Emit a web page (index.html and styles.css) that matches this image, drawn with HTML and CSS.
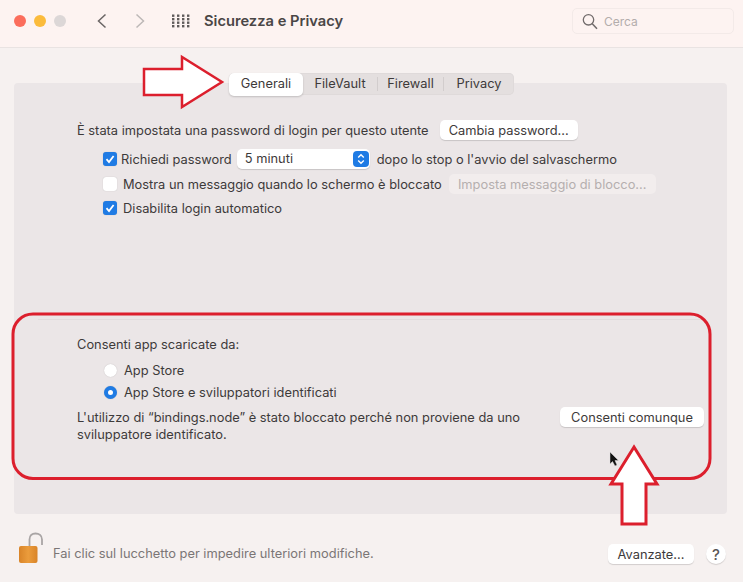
FILE: index.html
```html
<!DOCTYPE html>
<html lang="it">
<head>
    <meta charset="UTF-8">
    <meta name="viewport" content="width=device-width, initial-scale=1.0">
    <title>Sicurezza e Privacy</title>
    <link rel="stylesheet" href="styles.css">
</head>
<body>
    <header class="toolbar">
        <div class="lights">
            <span class="light light-red"></span>
            <span class="light light-yellow"></span>
            <span class="light light-gray"></span>
        </div>
        <div class="nav-arrows">
            <svg width="12" height="16" viewBox="0 0 12 16"><path d="M9.5 1.5 2.5 8l7 6.5" fill="none" stroke="#6a6565" stroke-width="1.5"/></svg>
            <svg width="12" height="16" viewBox="0 0 12 16"><path d="M2.500 1.500 9.500 8l-7 6.500" fill="none" stroke="#bdb8b7" stroke-width="1.5"/></svg>
        </div>
        <svg class="grid-icon" width="18" height="14" viewBox="0 0 18 14" fill="#5f5a5a">
            <rect x="0" y="0.500" width="2.400" height="2.400"/><rect x="5" y="0.500" width="2.400" height="2.400"/><rect x="10" y="0.500" width="2.400" height="2.400"/><rect x="15" y="0.500" width="2.400" height="2.400"/>
            <rect x="0" y="4" width="2.400" height="2.400"/><rect x="5" y="4" width="2.400" height="2.400"/><rect x="10" y="4" width="2.400" height="2.400"/><rect x="15" y="4" width="2.400" height="2.400"/>
            <rect x="0" y="7.500" width="2.400" height="2.400"/><rect x="5" y="7.500" width="2.400" height="2.400"/><rect x="10" y="7.500" width="2.400" height="2.400"/><rect x="15" y="7.500" width="2.400" height="2.400"/>
            <rect x="0" y="11" width="2.400" height="2.400"/><rect x="5" y="11" width="2.400" height="2.400"/><rect x="10" y="11" width="2.400" height="2.400"/><rect x="15" y="11" width="2.400" height="2.400"/>
        </svg>
        <h1 class="title">Sicurezza e Privacy</h1>
        <div class="search">
            <svg width="16" height="17" viewBox="0 0 16 17"><circle cx="6.500" cy="6.800" r="5.200" fill="none" stroke="#716b6b" stroke-width="1.300"/><path d="M10.300 10.800 15 15.800" stroke="#716b6b" stroke-width="1.500"/></svg>
            <span>Cerca</span>
        </div>
    </header>

    <main class="content">
        <nav class="tabs">
            <span class="tab tab-active">Generali</span>
            <span class="tab tab-filevault">FileVault</span>
            <span class="tab-sep"></span>
            <span class="tab tab-firewall">Firewall</span>
            <span class="tab-sep"></span>
            <span class="tab tab-privacy">Privacy</span>
        </nav>

        <section class="panel">
            <div class="panel-top">
                <div class="row">
                    <span>È stata impostata una password di login per questo utente</span>
                    <button class="btn btn-change">Cambia password...</button>
                </div>
                <div class="row row-check row-password">
                    <span class="check check-on"><svg width="10" height="10" viewBox="0 0 10 10"><path d="M1.500 5.200 4 8l4.600-6" fill="none" stroke="#fff" stroke-width="1.800"/></svg></span>
                    <span class="label-tight">Richiedi password</span>
                    <span class="select">5 minuti
                        <span class="select-arrows"><svg width="8" height="12" viewBox="0 0 8 12"><path d="M1.200 4.500 4 1.800l2.800 2.700M1.200 7.500 4 10.200l2.800-2.700" fill="none" stroke="#fff" stroke-width="1.400"/></svg></span>
                    </span>
                    <span>dopo lo stop o l'avvio del salvaschermo</span>
                </div>
                <div class="row row-check row-message">
                    <span class="check"></span>
                    <span>Mostra un messaggio quando lo schermo è bloccato</span>
                    <button class="btn btn-disabled">Imposta messaggio di blocco...</button>
                </div>
                <div class="row row-check row-login">
                    <span class="check check-on"><svg width="10" height="10" viewBox="0 0 10 10"><path d="M1.500 5.200 4 8l4.600-6" fill="none" stroke="#fff" stroke-width="1.800"/></svg></span>
                    <span>Disabilita login automatico</span>
                </div>
            </div>

            <div class="panel-bottom">
                <p class="gate-title">Consenti app scaricate da:</p>
                <div class="radio-row radio-row-first">
                    <span class="radio"></span>
                    <span>App Store</span>
                </div>
                <div class="radio-row">
                    <span class="radio radio-on"></span>
                    <span>App Store e sviluppatori identificati</span>
                </div>
                <div class="blocked">
                    <p class="blocked-text">L'utilizzo di “bindings.node” è stato bloccato perché non proviene da uno sviluppatore identificato.</p>
                    <button class="btn btn-allow">Consenti comunque</button>
                </div>
            </div>
        </section>

        <footer class="footer">
            <svg class="lock" width="27" height="32" viewBox="0 0 27 32">
                <defs>
                    <linearGradient id="lockBody" x1="0" x2="1" y1="0" y2="0">
                        <stop offset="0" stop-color="#d98428"/>
                        <stop offset="0.500" stop-color="#eb9c3c"/>
                        <stop offset="1" stop-color="#d98428"/>
                    </linearGradient>
                </defs>
                <path d="M11.500 15V7.500C11.500 3.500 14 1.500 17.500 1.500S24 3.500 24 7.500V13" fill="none" stroke="#a9a5a5" stroke-width="1.800"/>
                <rect x="1" y="14" width="18.500" height="17" rx="2" fill="url(#lockBody)"/>
            </svg>
            <span class="lock-text">Fai clic sul lucchetto per impedire ulteriori modifiche.</span>
            <button class="btn btn-advanced">Avanzate...</button>
            <button class="help">?</button>
        </footer>
    </main>

    <svg class="annotations" width="743" height="582" viewBox="0 0 743 582">
        <rect x="13" y="314" width="697" height="164.500" rx="20" fill="none" stroke="#dc1f2d" stroke-width="3"/>
        <path d="M144 69H182V57L222 82 182 107V95H144Z" fill="#fff" stroke="#dc1f2d" stroke-width="2.500"/>
        <path d="M634 447 657 484H646V524H622V484H611Z" fill="#fff" stroke="#dc1f2d" stroke-width="3"/>
        <path d="M610 452V464L612.500 461.500 615 466 617 465 615 460.500H618.500Z" fill="#111" stroke="#ddd" stroke-width="0.500"/>
    </svg>
</body>
</html>
```

FILE: styles.css
```css
:root {
    --text: #3d3a3a;
    --red: #dc1f2d;
    --blue: #1f7be4;
}

* {
    box-sizing: border-box;
}

body {
    margin: 0;
    width: 743px;
    height: 582px;
    overflow: hidden;
    position: relative;
    background: #f6f1f0;
    color: var(--text);
    font-family: Inter, "Liberation Sans", sans-serif;
    font-size: 12.85px;
}

p {
    margin: 0;
}

/* toolbar */
.toolbar {
    height: 48px;
    display: flex;
    align-items: center;
    background: #fdf3f1;
    border-bottom: 1px solid #e9e3e2;
    padding: 0 9px 5px 14px;
}

.lights {
    display: flex;
    gap: 8px;
}

.light {
    width: 12px;
    height: 12px;
    border-radius: 50%;
}

.light-red {
    background: #fb6d5c;
}

.light-yellow {
    background: #fbbb3c;
}

.light-gray {
    background: #dcd7d7;
}

.nav-arrows {
    display: flex;
    gap: 26px;
    margin-left: 30px;
}

.grid-icon {
    margin-left: 26px;
}

.title {
    margin: 0 0 0 14px;
    font-size: 14.7px;
    font-weight: 600;
    color: #4a4646;
}

.search {
    margin-left: auto;
    width: 162px;
    height: 26px;
    display: flex;
    align-items: center;
    gap: 6px;
    padding-left: 9px;
    border: 1px solid #f3eae8;
    border-radius: 5px;
    color: #b3adac;
    font-size: 12px;
}

/* tabs + panel */
.content {
    padding: 0 16px 0 14px;
}

.tabs {
    position: relative;
    width: 285px;
    height: 22px;
    margin: 25px 0 -12px 215px;
    display: flex;
    align-items: center;
    background: #e4dfdf;
    border-radius: 5px;
    box-shadow: inset 0 0 0 1px #dfdada;
}

.tab {
    text-align: center;
    line-height: 22px;
}

.tab-active {
    width: 74px;
    height: 23px;
    background: #fff;
    border-radius: 5px;
    box-shadow: 0 1px 2px #0000002e;
}

.tab-filevault {
    width: 74px;
}

.tab-firewall {
    width: 65px;
}

.tab-privacy {
    width: 70px;
}

.tab-sep {
    width: 1px;
    height: 14px;
    background: #d2cdcd;
}

.panel {
    height: 431px;
    background: #ebe6e7;
    border-radius: 4px;
}

.panel-top {
    height: 237px;
    padding: 37px 0 0 39px;
    border-bottom: 1px solid #e1dcdc;
    margin: 0 24px;
}

.row {
    display: flex;
    align-items: center;
    height: 20px;
}

.row-check {
    margin-left: 26px;
}

.row-password {
    margin-top: 9px;
}

.row-message {
    margin-top: 5px;
}

.row-login {
    margin-top: 4px;
}

.label-tight {
    margin-left: -2px;
}

.check {
    width: 14px;
    height: 14px;
    margin-right: 6px;
    display: flex;
    align-items: center;
    justify-content: center;
    border-radius: 3px;
    background: #fff;
    box-shadow: 0 0 1px #0000003d;
}

.check-on {
    background: var(--blue);
}

.btn {
    height: 20px;
    padding: 0;
    border: 0;
    border-radius: 5px;
    background: #fff;
    color: var(--text);
    font: inherit;
    box-shadow: 0 1px 1px #00000026;
}

.btn-change {
    width: 138px;
    margin-left: 11px;
}

.btn-disabled {
    width: 207px;
    margin-left: 7px;
    background: #f2eded;
    color: #b5afaf;
    box-shadow: none;
}

.select {
    position: relative;
    width: 133px;
    height: 20px;
    margin: 0 7px 0 5px;
    padding-left: 8px;
    line-height: 20px;
    background: #fff;
    border-radius: 5px;
    box-shadow: 0 1px 1px #00000026;
}

.select-arrows {
    position: absolute;
    top: 2px;
    right: 1px;
    width: 16px;
    height: 16px;
    display: flex;
    align-items: center;
    justify-content: center;
    background: var(--blue);
    border-radius: 4px;
}

.panel-bottom {
    padding: 17px 23px 0 63px;
}

.gate-title {
    line-height: 16px;
}

.radio-row {
    display: flex;
    align-items: center;
    gap: 7px;
    height: 22px;
    margin-left: 27px;
}

.radio-row-first {
    margin-top: 6px;
}

.radio {
    width: 13px;
    height: 13px;
    border-radius: 50%;
    background: #fff;
    box-shadow: 0 0 1px #0000003d;
}

.radio-on {
    border: 4px solid var(--blue);
}

.blocked {
    display: flex;
    align-items: flex-start;
    justify-content: space-between;
    margin-top: 5px;
}

.blocked-text {
    width: 470px;
    line-height: 17px;
    padding-top: 1px;
}

.btn-allow {
    width: 144px;
    margin-top: -1px;
}

/* bottom bar */
.footer {
    display: flex;
    align-items: center;
    height: 32px;
    margin-top: 18px;
    padding: 0 1px 0 4px;
}

.lock {
    flex: none;
}

.lock-text {
    margin: 11px 0 0 8px;
    color: #7b7676;
}

.btn-advanced {
    width: 86px;
    margin: 12px 0 0 auto;
}

.help {
    width: 20px;
    height: 20px;
    margin: 12px 0 0 12px;
    padding: 0;
    border: 0;
    border-radius: 50%;
    background: #fff;
    color: #5a5656;
    font: 500 15px Inter, sans-serif;
    box-shadow: 0 1px 1px #00000026;
}

/* red marks drawn over the screenshot */
.annotations {
    position: absolute;
    top: 0;
    left: 0;
    pointer-events: none;
}
```
